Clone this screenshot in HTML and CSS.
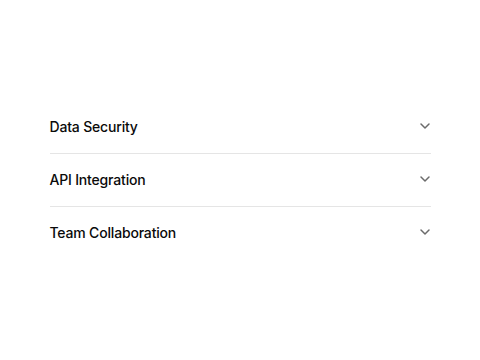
FILE: index.html
```html
<!DOCTYPE html>
<html>
<head>
<meta charset="utf-8">
<link rel="stylesheet" href="styles.css">
</head>
<body>
<div class="page">
  <div class="accordion">
    <div class="item">
      <span class="label">Data Security</span>
      <svg class="chev" width="16" height="16" viewBox="0 0 16 16" fill="none"><path d="M4 6l4 4 4-4" stroke="#6b6b6b" stroke-width="1.5" stroke-linecap="round" stroke-linejoin="round"/></svg>
    </div>
    <div class="item">
      <span class="label">API Integration</span>
      <svg class="chev" width="16" height="16" viewBox="0 0 16 16" fill="none"><path d="M4 6l4 4 4-4" stroke="#6b6b6b" stroke-width="1.5" stroke-linecap="round" stroke-linejoin="round"/></svg>
    </div>
    <div class="item last">
      <span class="label">Team Collaboration</span>
      <svg class="chev" width="16" height="16" viewBox="0 0 16 16" fill="none"><path d="M4 6l4 4 4-4" stroke="#6b6b6b" stroke-width="1.5" stroke-linecap="round" stroke-linejoin="round"/></svg>
    </div>
  </div>
</div>
</body>
</html>
```
FILE: styles.css
```css
html, body { margin: 0; padding: 0; background: #fff; }
.page {
  width: 480px;
  height: 360px;
  display: flex;
  align-items: center;
  justify-content: center;
}
.accordion {
  width: 381px;
  display: flex;
  flex-direction: column;
}
.item {
  height: 50px;
  padding-bottom: 2px;
  display: flex;
  align-items: center;
  justify-content: space-between;
  border-bottom: 1px solid #e5e5e5;
}
.item.last { border-bottom: none; }
.label {
  font-family: Inter, "Noto Sans", sans-serif;
  font-size: 14px;
  font-weight: 500;
  letter-spacing: -0.18px;
  color: #0a0a0a;
}
.chev { margin-right: -2px; }
```
